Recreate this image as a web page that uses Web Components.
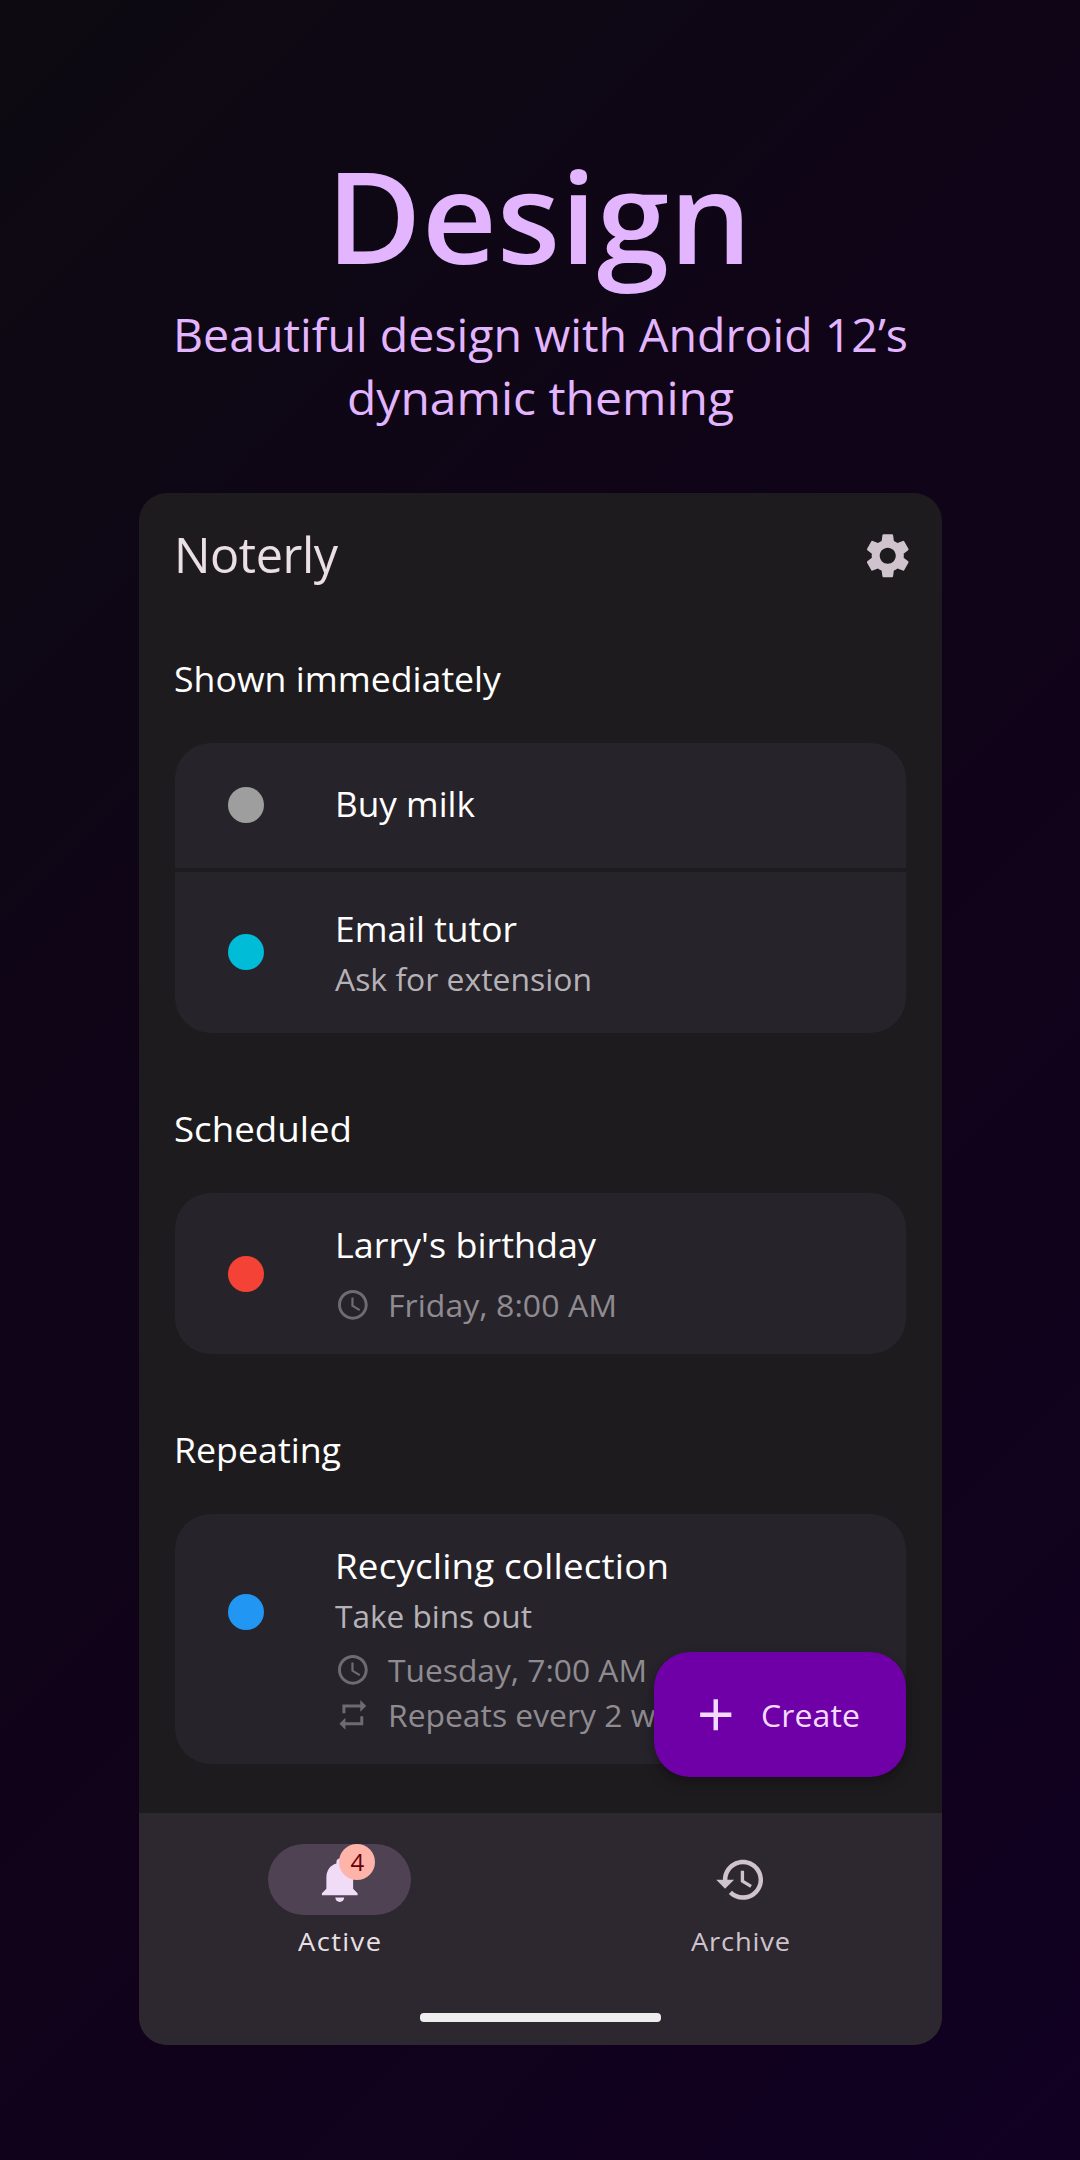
<!DOCTYPE html>
<html lang="en">
<head>
<meta charset="utf-8">
<title>Noterly – Design</title>
<style>
html,body{margin:0;padding:0}
body{width:1080px;height:2160px;overflow:hidden;font-family:"Open Sans","DM Sans",sans-serif;
background:linear-gradient(135deg,#0d0a11 0%,#0f0517 33%,#10021a 67%,#110022 100%)}
</style>
</head>
<body>
<promo-page></promo-page>
<script>
const ICONS={
gear:'M19.14 12.94c.04-.3.06-.61.06-.94 0-.32-.02-.64-.07-.94l2.03-1.58c.18-.14.23-.41.12-.61l-1.92-3.32c-.12-.22-.37-.29-.59-.22l-2.39.96c-.5-.38-1.03-.7-1.62-.94l-.36-2.54c-.04-.24-.24-.41-.48-.41h-3.84c-.24 0-.43.17-.47.41l-.36 2.54c-.59.24-1.13.57-1.62.94l-2.39-.96c-.22-.08-.47 0-.59.22L2.74 8.87c-.12.21-.08.47.12.61l2.03 1.58c-.05.3-.09.63-.09.94s.02.64.07.94l-2.03 1.58c-.18.14-.23.41-.12.61l1.92 3.32c.12.22.37.29.59.22l2.39-.96c.5.38 1.03.7 1.62.94l.36 2.54c.05.24.24.41.48.41h3.84c.24 0 .44-.17.47-.41l.36-2.54c.59-.24 1.13-.56 1.62-.94l2.39.96c.22.08.47 0 .59-.22l1.92-3.32c.12-.22.07-.47-.12-.61l-2.01-1.58zM12 15.6c-1.98 0-3.6-1.62-3.6-3.6s1.62-3.6 3.6-3.6 3.6 1.62 3.6 3.6-1.62 3.6-3.6 3.6z',
clock:'M11.99 2C6.47 2 2 6.48 2 12s4.47 10 9.99 10C17.52 22 22 17.52 22 12S17.52 2 11.99 2zM12 20c-4.42 0-8-3.58-8-8s3.58-8 8-8 8 3.58 8 8-3.58 8-8 8zm.5-13H11v6l5.25 3.15.75-1.23-4.5-2.67z',
repeat:'M7 7h10v3l4-4-4-4v3H5v6h2V7zm10 10H7v-3l-4 4 4 4v-3h12v-6h-2v4z',
plus:'M19 13h-6v6h-2v-6H5v-2h6V5h2v6h6v2z',
bell:'M12 22c1.1 0 2-.9 2-2h-4c0 1.1.9 2 2 2zm6-6v-5c0-3.07-1.63-5.64-4.5-6.32V4c0-.83-.67-1.5-1.5-1.5s-1.5.67-1.5 1.5v.68C7.64 5.36 6 7.92 6 11v5l-2 2v1h16v-1l-2-2z',
history:'M13 3c-4.97 0-9 4.03-9 9H1l3.89 3.89.07.14L9 12H6c0-3.87 3.13-7 7-7s7 3.13 7 7-3.13 7-7 7c-1.93 0-3.68-.79-4.94-2.06l-1.42 1.42C8.27 19.99 10.51 21 13 21c4.97 0 9-4.03 9-9s-4.03-9-9-9zm-1 5v5l4.28 2.54.72-1.21-3.5-2.08V8H12z'
};
function define(name,html,ready){
  const t=document.createElement('template');t.innerHTML=html;
  customElements.define(name,class extends HTMLElement{
    constructor(){super();this.attachShadow({mode:'open'}).append(t.content.cloneNode(true));}
    connectedCallback(){if(ready)ready(this,this.shadowRoot);}
  });
}
// One line of type that fills the given measure: letters widen by up to 5%, tracking takes the rest.
define('type-line','<style>:host{display:block;white-space:nowrap;font-size:var(--s);line-height:var(--l)}span{display:inline-block;transform-origin:0 50%}</style><span><slot></slot></span>',(el,r)=>{
  const w=parseFloat(el.getAttribute('measure'));
  el.style.setProperty('--s',el.getAttribute('size')+'px');
  el.style.setProperty('--l',el.getAttribute('line')+'px');
  if(w){const s=r.querySelector('span'),n=el.textContent.length;
    const nat=s.getBoundingClientRect().width;
    const k=Math.max(1,Math.min(1.05,w/nat));
    const x=(w/k-nat)/(n-1);
    s.style.letterSpacing=x+'px';s.style.transform='translateY(var(--nudge,1px)) scaleX('+k+')';
    el.style.width=w+'px';}
});
define('m-icon','<style>:host{display:block;flex:none}svg{display:block;width:100%;height:100%;fill:currentColor}</style><svg viewBox="0 0 24 24"><path/></svg>',(el,r)=>{
  const z=el.getAttribute('size')+'px';el.style.width=z;el.style.height=z;
  r.querySelector('path').setAttribute('d',ICONS[el.getAttribute('name')]);
});
define('note-group',`<style>:host{display:block}.head{color:#fff;padding:0 0 0 35.4px}.cards{display:flex;flex-direction:column;gap:4.4px;margin:37.7px 35.7px 0 36px;border-radius:36px;overflow:hidden}</style>
<div class="head"><slot name="head"></slot></div><div class="cards"><slot></slot></div>`);
define('note-card',`<style>:host{display:flex;align-items:center;background:#27232a;box-sizing:border-box;padding-left:53.2px;color:#fff}
i{width:36px;height:36px;border-radius:50%;background:var(--dot);flex:none}
.text{margin-left:70.5px;align-self:flex-start;flex:1}</style><i></i><div class="text"><slot></slot></div>`,(el)=>{
  el.style.height=el.getAttribute('height')+'px';el.style.setProperty('--dot',el.getAttribute('dot'));
});
const row=icon=>`<style>:host{display:flex;align-items:center;gap:17.5px;height:44.5px;color:#8f8c91}m-icon{color:#6f6b72}::slotted(*){padding-bottom:1.6px}</style><m-icon name="${icon}" size="35.7"></m-icon><slot></slot>`;
define('time-row',row('clock'));
define('repeat-row',row('repeat'));
define('create-button',`<style>:host{position:absolute;left:515px;top:1159.3px;width:252px;height:124.7px;border-radius:36px;background:#6f00a8;color:#f3daff;display:flex;align-items:center;box-sizing:border-box;padding-left:35.4px;gap:18px;box-shadow:0 7px 14px rgba(0,0,0,.2),0 2px 6px rgba(0,0,0,.15)}::slotted(*){padding-bottom:1.6px}</style><m-icon name="plus" size="53.5"></m-icon><slot></slot>`);
define('nav-item',`<style>:host{flex:1;display:flex;flex-direction:column;align-items:center;color:#cfc3cd;--nudge:0px}
:host([active]){color:#e9e0e5}.pill{width:143px;height:71.3px;border-radius:36px;display:flex;align-items:center;justify-content:center;position:relative}
:host([active]) .pill{background:#4f4253;color:#f0dcf7}.label{margin-top:5.4px}
.badge{position:absolute;left:71.3px;top:0;width:36px;height:36px;border-radius:50%;background:#ffb4a9;color:#690005;display:none;align-items:center;justify-content:center}
:host([active]) .badge{display:flex}</style>
<div class="pill"><slot name="icon"></slot><div class="badge"><slot name="badge"></slot></div></div><div class="label"><slot></slot></div>`);
define('nav-bar',`<style>:host{display:flex;flex-direction:column;align-items:center;background:#2d282f;height:232px;box-sizing:border-box;padding-top:31.3px}
.items{display:flex;width:802.5px;height:169px}.home{width:240.5px;height:9.5px;border-radius:4px;background:#eee}</style>
<div class="items"><slot></slot></div><div class="home"></div>`);
define('app-panel',`<style>:host{display:flex;flex-direction:column;position:relative;width:802.5px;height:1551.7px;background:#1e1b1e;border-radius:28px;overflow:hidden;box-sizing:border-box}
header{height:125px;display:flex;align-items:center;justify-content:space-between;box-sizing:border-box;padding:0 27px 0 35px;color:#eadfe4}header m-icon{color:#cfc3ce}
::slotted([slot=title]){padding-bottom:5px}
.groups{flex:1}</style>
<header><slot name="title"></slot><m-icon name="gear" size="53.5"></m-icon></header><div class="groups"><slot></slot></div><slot name="nav"></slot>`);
define('promo-page',`<style>:host{display:flex;flex-direction:column;align-items:center;width:1080px;height:2160px}
.hero{height:493px;box-sizing:border-box;padding-top:130px;display:flex;flex-direction:column;align-items:center;color:#e3b5ff}
.big{font-weight:600;margin-left:-3px;--nudge:0px}.sub{margin-top:2px}
app-panel{margin-left:.5px}
.g1{margin-top:33px}.g2{margin-top:69px}.g3{margin-top:68.4px}
.detail{color:#b5b2b7}</style>
<div class="hero"><type-line class="big" size="126" line="170" measure="426">Design</type-line>
<type-line class="sub" size="46" line="63.3" measure="735">Beautiful design with Android 12’s</type-line><type-line size="46" line="63.3" measure="387">dynamic theming</type-line></div>
<app-panel>
<type-line slot="title" size="48.5" line="70" measure="164">Noterly</type-line>
<note-group class="g1"><type-line slot="head" size="35" line="54" measure="327">Shown immediately</type-line>
<note-card height="125" dot="#9e9e9e"><type-line style="padding-top:33.7px" size="35" line="54" measure="140">Buy milk</type-line></note-card>
<note-card height="160.5" dot="#00bcd7"><type-line style="padding-top:28.5px" size="35" line="54" measure="182">Email tutor</type-line><type-line class="detail" style="margin-top:1.7px" size="30.5" line="45" measure="257">Ask for extension</type-line></note-card></note-group>
<note-group class="g2"><type-line slot="head" style="--nudge:.4px" size="35" line="54" measure="178">Scheduled</type-line>
<note-card height="160.5" dot="#f44336"><type-line style="padding-top:24.1px" size="35" line="54" measure="261">Larry's birthday</type-line><time-row style="margin-top:11px"><type-line size="30.5" line="44" measure="229">Friday, 8:00 AM</type-line></time-row></note-card></note-group>
<note-group class="g3"><type-line slot="head" size="35" line="54" measure="167">Repeating</type-line>
<note-card height="250" dot="#2196f3" style="padding-bottom:53.6px"><type-line style="padding-top:24.6px" size="35" line="54" measure="334">Recycling collection</type-line><type-line class="detail" style="margin-top:1px" size="30.5" line="45" measure="197">Take bins out</type-line><time-row style="margin-top:9.3px"><type-line size="30.5" line="44" measure="259">Tuesday, 7:00 AM</type-line></time-row><repeat-row><type-line size="30.5" line="44" measure="335">Repeats every 2 weeks</type-line></repeat-row></note-card></note-group>
<create-button><type-line size="30.5" line="44" measure="99">Create</type-line></create-button>
<nav-bar slot="nav">
<nav-item active><m-icon slot="icon" name="bell" size="53.5"></m-icon><type-line slot="badge" size="24" line="36">4</type-line><type-line size="26" line="40" measure="83">Active</type-line></nav-item>
<nav-item><m-icon slot="icon" name="history" size="53.5"></m-icon><type-line size="26" line="40" measure="99">Archive</type-line></nav-item>
</nav-bar>
</app-panel>`);
</script>
</body>
</html>
